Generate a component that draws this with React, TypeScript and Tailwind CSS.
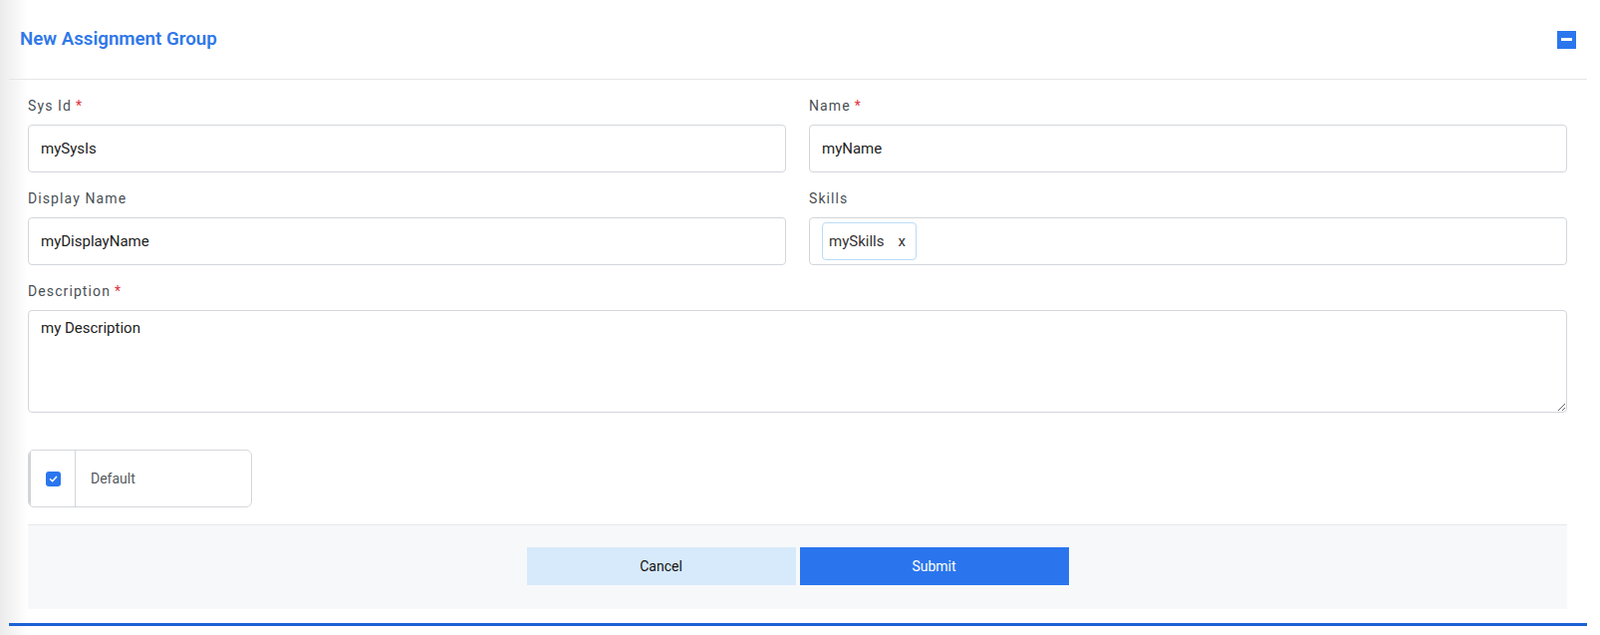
import { useState } from "react";

function Label({ text, required }: { text: string; required?: boolean }) {
  return (
    <label className="block text-[14px] leading-5 tracking-[1.1px] text-[#4a4f55] mb-[9px]">
      {text}
      {required && <span className="text-[#e0323c] ml-1">*</span>}
    </label>
  );
}

function TextField({ value }: { value: string }) {
  return (
    <input
      type="text"
      defaultValue={value}
      className="w-full h-[48px] px-3 rounded border border-[#d3d6da] bg-white text-[15px] text-[#222] outline-none"
    />
  );
}

export default function App() {
  const [isDefault, setIsDefault] = useState(true);
  const [skills, setSkills] = useState<string[]>(["mySkills"]);

  return (
    <div
      className="min-h-[637px] w-full pl-[9px] pr-[13px] bg-[linear-gradient(to_right,#ebebeb,#ffffff_28px)]"
      style={{ fontFamily: "Roboto, 'Liberation Sans', sans-serif" }}
    >
      <div className="flex items-center justify-between h-[80px] pl-[11px] pr-[11px] border-b border-[#e4e6e8]">
        <h2 className="text-[18.7px] font-semibold text-[#2f78e8]">New Assignment Group</h2>
        <button className="w-[19px] h-[18px] bg-[#2b76ee] flex items-center justify-center">
          <span className="block w-[11px] h-[3px] bg-white" />
        </button>
      </div>

      <div className="pl-[19px] pr-[20px] pt-4">
        <div className="grid grid-cols-2 gap-x-[23px] gap-y-[16px]">
          <div>
            <Label text="Sys Id" required />
            <TextField value="mySysIs" />
          </div>
          <div>
            <Label text="Name" required />
            <TextField value="myName" />
          </div>
          <div>
            <Label text="Display Name" />
            <TextField value="myDisplayName" />
          </div>
          <div>
            <Label text="Skills" />
            <div className="w-full h-[48px] px-3 rounded border border-[#d3d6da] bg-white flex items-center gap-2">
              {skills.map((s) => (
                <span
                  key={s}
                  className="flex items-center h-[38px] pl-[6px] pr-[10px] rounded border border-[#b9dbf5] text-[15px] text-[#333]"
                >
                  {s}
                  <button
                    onClick={() => setSkills(skills.filter((x) => x !== s))}
                    className="ml-[14px] text-[15px] text-[#333] leading-none"
                  >
                    x
                  </button>
                </span>
              ))}
            </div>
          </div>
          <div className="col-span-2">
            <Label text="Description" required />
            <textarea
              defaultValue="my Description"
              className="block w-full h-[103px] px-3 pt-[6px] rounded border border-[#d3d6da] bg-white text-[15px] text-[#222] outline-none"
            />
          </div>
        </div>

        <div className="mt-[37px] flex w-[225px] h-[58px] rounded-md border border-[#d3d6da] overflow-hidden">
          <div className="w-[47px] flex items-center justify-center border-r border-[#d3d6da] border-l-2 border-l-[#d0d4d8]">
            <button
              onClick={() => setIsDefault(!isDefault)}
              className={`w-[15px] h-[15px] rounded-[3px] flex items-center justify-center ${
                isDefault ? "bg-[#2b76ee]" : "bg-white border border-[#aaa]"
              }`}
            >
              {isDefault && (
                <svg viewBox="0 0 12 12" className="w-[9px] h-[9px]">
                  <path d="M2 6.3 L4.8 9 L10 3.2" fill="none" stroke="white" strokeWidth="2" strokeLinecap="round" strokeLinejoin="round" />
                </svg>
              )}
            </button>
          </div>
          <div className="flex items-center pl-[15px] text-[14px] text-[#555a60]">Default</div>
        </div>

        <div className="mt-[17px] h-[85px] pt-[22px] bg-[#f7f8fa] border-t border-[#e6e8ea] flex items-start justify-center gap-[4px]">
          <button className="w-[270px] h-[38px] bg-[#d7eafb] text-[14px] text-[#111]">Cancel</button>
          <button className="w-[270px] h-[38px] bg-[#2a75ee] text-[14px] text-white">Submit</button>
        </div>
      </div>

      <div className="mt-[14px] h-[3px] bg-[#1b62d4]" />
    </div>
  );
}
